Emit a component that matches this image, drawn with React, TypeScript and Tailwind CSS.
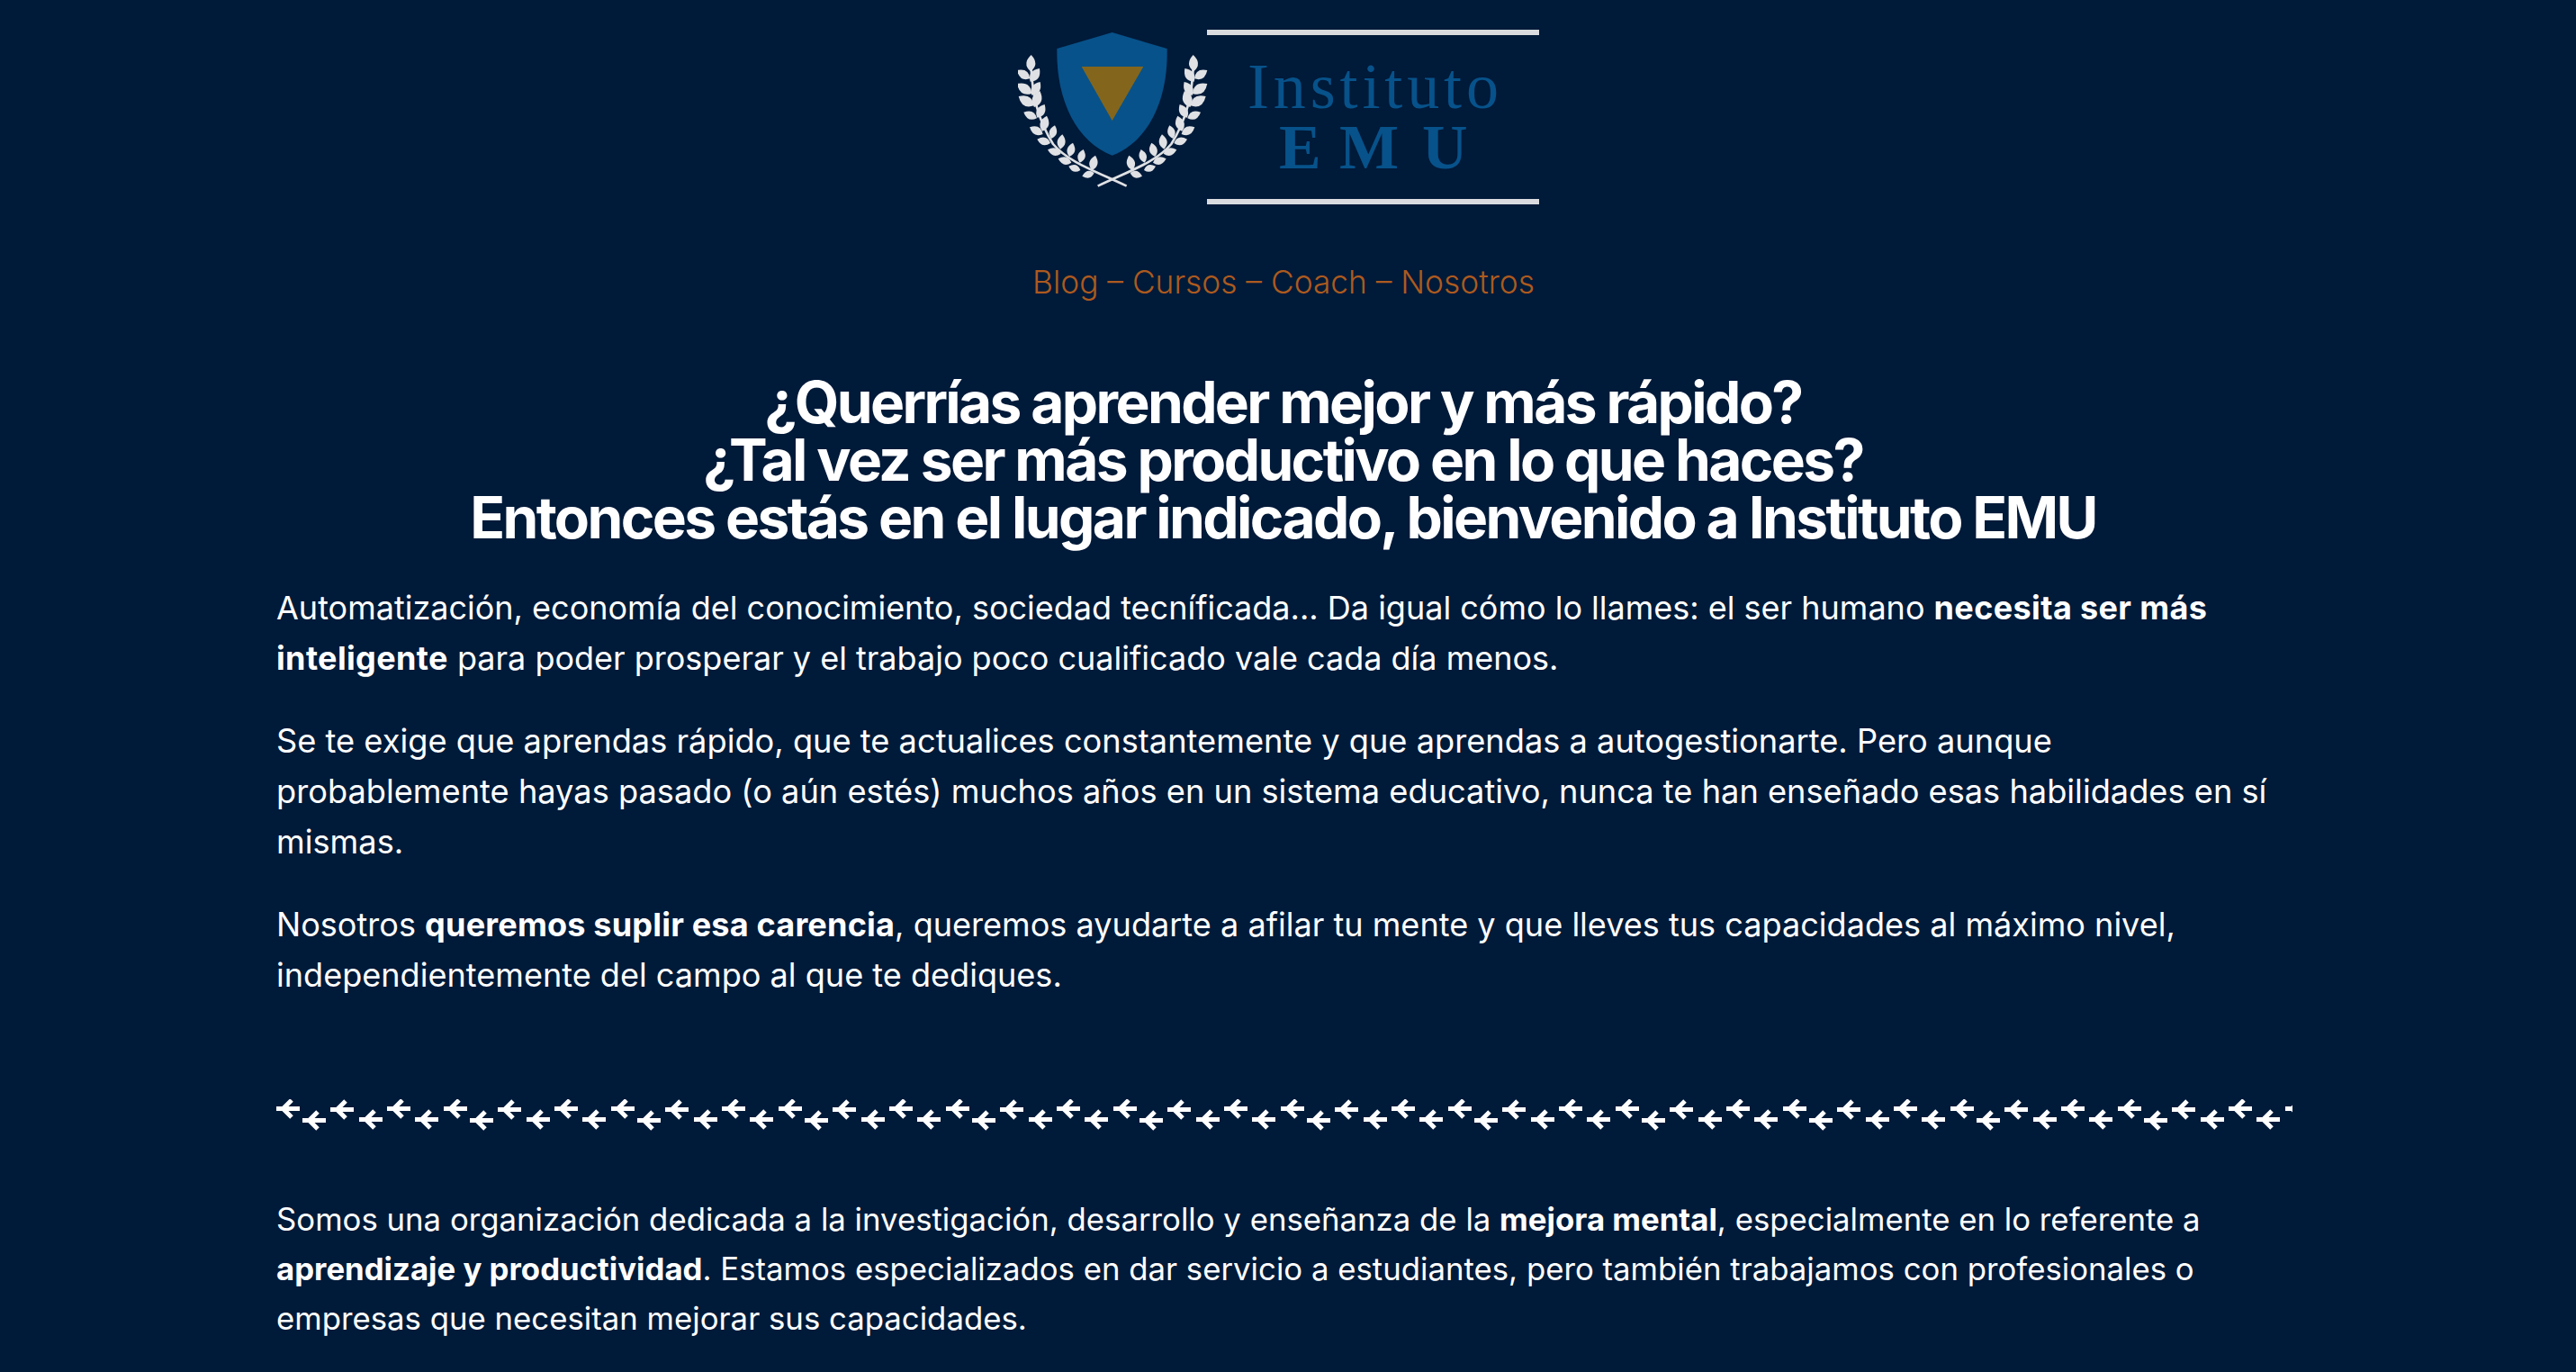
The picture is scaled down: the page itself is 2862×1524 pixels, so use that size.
const outerLeaves = [
  [73, 202, 30, 174],
  [79, 252, 30, 219],
  [86, 292, 35, 261],
  [96, 334, 52, 314],
  [116, 387, 72, 364],
  [141, 417, 97, 404],
  [176, 452, 132, 439],
  [211, 482, 167, 469],
  [241, 507, 202, 494],
  [287, 516, 247, 527],
];

const innerLeaves = [
  [75, 178, 77, 123],
  [74, 212, 105, 168],
  [79, 257, 107, 213],
  [87, 297, 106, 243],
  [97, 332, 122, 288],
  [114, 377, 129, 326],
  [144, 402, 156, 358],
  [174, 437, 181, 388],
  [204, 462, 216, 416],
  [239, 482, 251, 438],
  [279, 507, 291, 458],
];

const leafPath = ([x1, y1, x2, y2]: number[]) => {
  const dx = x2 - x1;
  const dy = y2 - y1;
  // bulge sideways from the leaf's axis
  const nx = -dy * 0.55;
  const ny = dx * 0.55;
  const cx = x1 + dx * 0.45;
  const cy = y1 + dy * 0.45;
  return `M${x1} ${y1}Q${cx + nx} ${cy + ny} ${x2} ${y2}Q${cx - nx} ${cy - ny} ${x1} ${y1}Z`;
};

const Branch = () => (
  <g>
    <path
      d="M76 150C80 260 100 340 150 420C200 480 290 510 395 560"
      fill="none"
      stroke="#dfe1e4"
      strokeWidth="8"
    />
    {[...outerLeaves, ...innerLeaves].map((leaf) => (
      <path key={leaf.join("-")} d={leafPath(leaf)} fill="#dfe1e4" />
    ))}
  </g>
);

const Logo = () => (
  <svg width="600" height="250" viewBox="1131 30 600 250" className="block">
    <g transform="translate(1120 20) scale(0.3333)">
      <Branch />
      <g transform="translate(694 0) scale(-1 1)">
        <Branch />
      </g>
      <path
        d="M347 48L530 102C534 270 470 410 347 458C224 410 160 270 163 102Z"
        fill="#07528a"
      />
      <path d="M245 162H451L347 342Z" fill="#83661c" />
    </g>
    <rect x="1341" y="33" width="369" height="6" fill="#d9dbde" />
    <rect x="1341" y="221" width="369" height="6" fill="#d9dbde" />
    <text
      x="1386"
      y="120"
      textLength="279"
      className="fill-[#07528a] font-['Liberation_Serif',serif] text-[72px]"
    >
      Instituto
    </text>
    <text
      x="1421 1488 1580"
      y="187"
      className="fill-[#07528a] font-['Liberation_Serif',serif] text-[70px] font-bold"
    >
      EMU
    </text>
  </svg>
);

const arrowSteps = [
  [0, 0],
  [29, 13],
  [60, 1],
  [92, 12],
  [123, 0],
  [154, 12],
];

const ArrowDivider = () => {
  const arrows: { x: number; y: number }[] = [];
  for (let i = 0; i < 13; i++) {
    arrowSteps.forEach(([x, y]) => arrows.push({ x: x + i * 186, y }));
  }
  return (
    <svg width="2240" height="40" viewBox="0 0 2240 40" className="block">
      {arrows.map((a) => (
        <path
          key={`${a.x}-${a.y}`}
          d={`M${a.x} ${a.y + 10.5}H${a.x + 26}M${a.x + 17} ${a.y + 1}L${a.x + 7.5} ${a.y + 10.5}L${a.x + 17} ${a.y + 20}`}
          fill="none"
          stroke="#ffffff"
          strokeWidth="5"
        />
      ))}
    </svg>
  );
};

export default function App() {
  return (
    <div className="h-screen overflow-hidden bg-[#001a39] text-white font-['Inter',sans-serif]">
      <div className="flex justify-center pt-[30px]">
        <Logo />
      </div>

      <nav className="mt-[7px] pr-[10px] text-center text-[35.3px] font-light leading-[54px] text-[#ad5a1e]">
        Blog – Cursos – Coach – Nosotros
      </nav>

      <div className="mx-auto w-[2248px] pt-[74px]">
        <h1 className="pr-[11px] text-center text-[64px] font-bold leading-[64px] tracking-[-0.041em]">
          ¿Querrías aprender mejor y más rápido?
          <br />
          ¿Tal vez ser más productivo en lo que haces?
          <br />
          Entonces estás en el lugar indicado, bienvenido a Instituto EMU
        </h1>

        <div className="mt-[40px] flex max-w-[2226px] flex-col gap-[36px] leading-[56px]">
          <p className="text-[36px]">
            Automatización, economía del conocimiento, sociedad tecníficada... Da igual cómo lo llames: el ser humano{" "}
            <strong className="tracking-[0.01em]">necesita ser más inteligente</strong> para poder prosperar y el trabajo poco cualificado vale cada día menos.
          </p>
          <p className="text-[36.22px]">
            Se te exige que aprendas rápido, que te actualices constantemente y que aprendas a autogestionarte. Pero aunque probablemente hayas pasado (o aún estés) muchos años en un sistema educativo, nunca te han enseñado esas habilidades en sí mismas.
          </p>
          <p className="text-[36.1px]">
            Nosotros <strong className="tracking-[0.0045em]">queremos suplir esa carencia</strong>, queremos ayudarte a afilar tu mente y que lleves tus capacidades al máximo nivel, independientemente del campo al que te dediques.
          </p>
        </div>

        <div className="mt-[110px] mb-[66px]">
          <ArrowDivider />
        </div>

        <p className="text-[34.75px] leading-[54.75px]">
          Somos una organización dedicada a la investigación, desarrollo y enseñanza de la <strong>mejora mental</strong>, especialmente en lo referente a{" "}
          <strong>aprendizaje y productividad</strong>. Estamos especializados en dar servicio a estudiantes, pero también trabajamos con profesionales o empresas que necesitan mejorar sus capacidades.
        </p>
      </div>
    </div>
  );
}
